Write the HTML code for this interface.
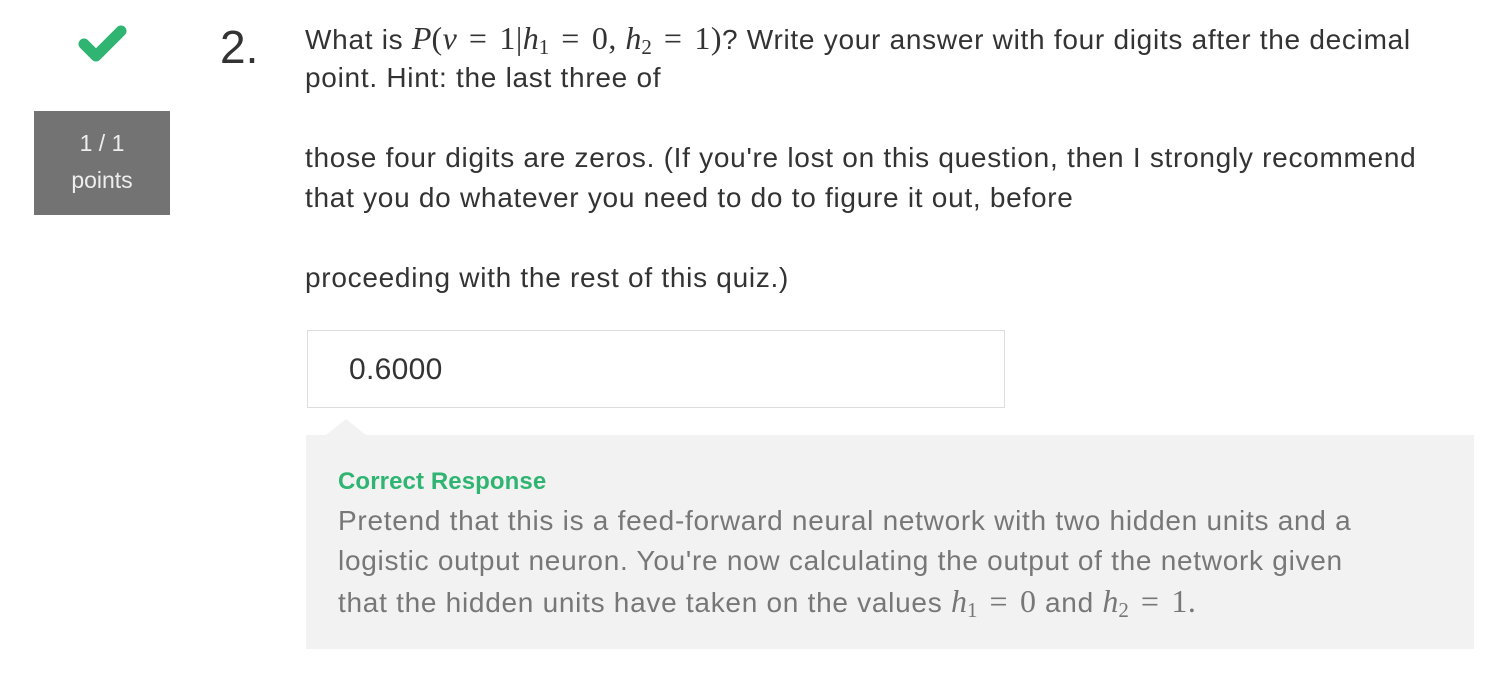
<!DOCTYPE html>
<html><head><style>
body{margin:0;width:1511px;height:680px;background:#fff;position:relative;overflow:hidden;font-family:"Liberation Sans",sans-serif;}
.l{position:absolute;white-space:nowrap;font-size:28px;letter-spacing:0.72px;color:#333;line-height:40px;}
.m{font-family:"Liberation Serif",serif;font-size:32px;letter-spacing:0.5px;}
.mi{font-family:"Liberation Serif",serif;font-style:italic;font-size:32px;letter-spacing:0;}
.e{display:inline-block;margin:0 12px;}
sub{font-size:21px;vertical-align:-5px;font-family:"Liberation Serif",serif;letter-spacing:0;}
.g{color:#777;}
</style></head><body>
<svg style="position:absolute;left:50px;top:24px" width="80" height="40" viewBox="0 0 80 40"><path d="M34 20 L46 32 L71 7" stroke="#2fb472" stroke-width="11" fill="none" stroke-linecap="round" stroke-linejoin="round"/></svg>
<div style="position:absolute;left:34px;top:111px;width:136px;height:104px;background:#737373;color:#eee;font-size:23px;text-align:center;line-height:37px;padding-top:14px;box-sizing:border-box">1 / 1<br>points</div>
<div class="l" style="left:220px;top:22px;font-size:46px;line-height:50px;letter-spacing:0;color:#333">2.</div>
<div class="l" style="left:305px;top:18px">What is <span class="mi">P</span><span class="m">(</span><span class="mi">v</span><span class="m e">=</span><span class="m">1|</span><span class="mi">h</span><sub>1</sub><span class="m e">=</span><span class="m">0, </span><span class="mi">h</span><sub>2</sub><span class="m e">=</span><span class="m">1)</span>? Write your answer with four digits after the decimal</div>
<div class="l" style="left:305px;top:58px">point. Hint: the last three of</div>
<div class="l" style="left:305px;top:138px">those four digits are zeros. (If you're lost on this question, then I strongly recommend</div>
<div class="l" style="left:305px;top:178px">that you do whatever you need to do to figure it out, before</div>
<div class="l" style="left:305px;top:258px">proceeding with the rest of this quiz.)</div>
<div style="position:absolute;left:307px;top:330px;width:696px;height:76px;border:1px solid #ddd;"></div>
<div class="l" style="left:349px;top:350px;font-size:30px;letter-spacing:0.3px">0.6000</div>
<div style="position:absolute;left:306px;top:435px;width:1168px;height:214px;background:#f2f2f2"></div>
<div style="position:absolute;left:326px;top:419px;width:0;height:0;border-left:20px solid transparent;border-right:20px solid transparent;border-bottom:16px solid #f2f2f2"></div>
<div class="l" style="left:338px;top:462px;font-size:24px;letter-spacing:0.1px;font-weight:bold;color:#2fb472">Correct Response</div>
<div class="l g" style="left:338px;top:501px">Pretend that this is a feed-forward neural network with two hidden units and a</div>
<div class="l g" style="left:338px;top:541px">logistic output neuron. You're now calculating the output of the network given</div>
<div class="l g" style="left:338px;top:581px">that the hidden units have taken on the values <span class="mi">h</span><sub>1</sub><span class="m e">=</span><span class="m">0</span> and <span class="mi">h</span><sub>2</sub><span class="m e">=</span><span class="m">1.</span></div>
</body></html>
